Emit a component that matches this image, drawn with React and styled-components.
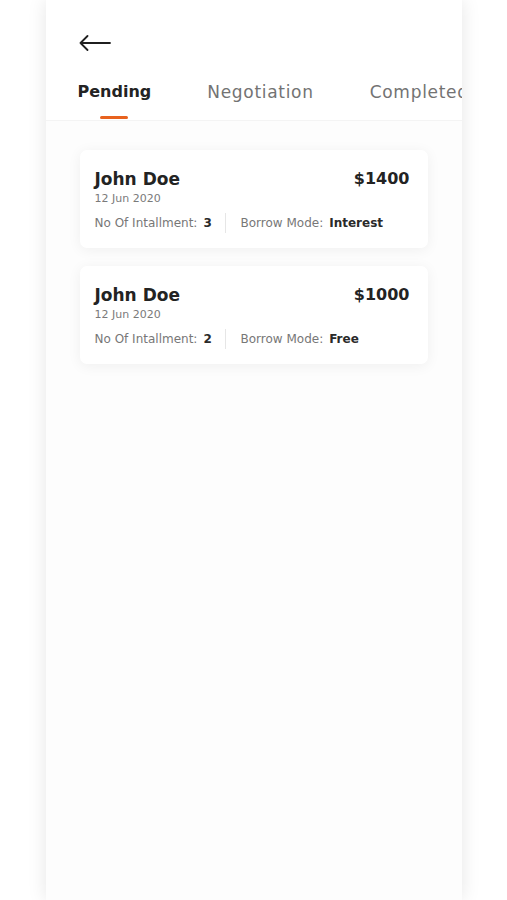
import React from "react";
import styled, { createGlobalStyle } from "styled-components";

const loans = [
  { name: "John Doe", date: "12 Jun 2020", amount: "$1400", installments: "3", mode: "Interest" },
  { name: "John Doe", date: "12 Jun 2020", amount: "$1000", installments: "2", mode: "Free" },
];

const tabs = ["Pending", "Negotiation", "Completed"];

const App = () => {
  return (
    <Page>
      <GlobalStyle />
      <Screen>
        <Header>
          <BackButton aria-label="Back">
            <svg width="32" height="16" viewBox="0 0 32 16" fill="none">
              <path
                d="M31 8H1.5M8.5 1L1.5 8l7 7"
                stroke="#1f1f1f"
                strokeWidth="1.8"
                strokeLinecap="round"
                strokeLinejoin="round"
              />
            </svg>
          </BackButton>
          <Tabs>
            {tabs.map((t, i) => (
              <Tab key={t} $active={i === 0}>
                {t}
              </Tab>
            ))}
          </Tabs>
        </Header>

        {/* list of loan requests */}
        <List>
          {loans.map((loan, i) => (
            <Card key={i}>
              <TopRow>
                <div>
                  <Name>{loan.name}</Name>
                  <DateText>{loan.date}</DateText>
                </div>
                <Amount>{loan.amount}</Amount>
              </TopRow>
              <InfoRow>
                <Info $width="130px">
                  No Of Intallment:<strong>{loan.installments}</strong>
                </Info>
                <Divider />
                <Info>
                  Borrow Mode:<strong>{loan.mode}</strong>
                </Info>
              </InfoRow>
            </Card>
          ))}
        </List>
      </Screen>
    </Page>
  );
};

export default App;

const GlobalStyle = createGlobalStyle`
  html, body {
    margin: 0;
    padding: 0;
    background: #ffffff;
    font-family: "DejaVu Sans", "Open Sans", sans-serif;
  }
  * {
    box-sizing: border-box;
  }
`;

const Page = styled.div`
  width: 100%;
  height: 900px;
  overflow: hidden;
  display: flex;
  justify-content: center;
  background: #ffffff;
`;

const Screen = styled.div`
  width: 416px;
  height: 900px;
  background: #fdfdfd;
  overflow: hidden;
  display: flex;
  flex-direction: column;
  box-shadow: 0 0 18px rgba(0, 0, 0, 0.1);
`;

const Header = styled.div`
  background: #ffffff;
  padding: 35px 0 0 32px;
  border-bottom: 1px solid #f4f4f4;
`;

const BackButton = styled.div`
  width: 32px;
  height: 16px;
  margin-left: 1px;
  display: flex;
  svg {
    display: block;
  }
`;

const Tabs = styled.div`
  display: flex;
  gap: 56px;
  margin-top: 31px;
  white-space: nowrap;
`;

const Tab = styled.div`
  position: relative;
  font-size: ${(p) => (p.$active ? "16px" : "17px")};
  line-height: 20px;
  padding-bottom: 18px;
  font-weight: ${(p) => (p.$active ? 700 : 400)};
  color: ${(p) => (p.$active ? "#232323" : "#737373")};
  letter-spacing: ${(p) => (p.$active ? "0" : "0.7px")};

  &::after {
    content: "";
    display: ${(p) => (p.$active ? "block" : "none")};
    position: absolute;
    left: 50%;
    bottom: 1px;
    width: 28px;
    height: 3px;
    margin-left: -14px;
    border-radius: 2px;
    background: #e8621e;
  }
`;

const List = styled.div`
  display: flex;
  flex-direction: column;
  gap: 18px;
  padding: 29px 34px;
`;

const Card = styled.div`
  background: #ffffff;
  border-radius: 7px;
  padding: 19px 18px 15px 15px;
  box-shadow: 0 2px 14px rgba(0, 0, 0, 0.06);
`;

const TopRow = styled.div`
  display: flex;
  justify-content: space-between;
  align-items: flex-start;
`;

const Name = styled.div`
  font-size: 17px;
  line-height: 20px;
  font-weight: 600;
  color: #232323;
`;

const DateText = styled.div`
  font-size: 11px;
  line-height: 14px;
  margin-top: 3px;
  color: #7a7a7a;
`;

const Amount = styled.div`
  font-size: 16px;
  line-height: 20px;
  font-weight: 700;
  color: #232323;
`;

const InfoRow = styled.div`
  display: flex;
  align-items: center;
  margin-top: 7px;
`;

const Info = styled.div`
  width: ${(p) => p.$width || "auto"};
  font-size: 12px;
  line-height: 20px;
  color: #777777;
  white-space: nowrap;

  strong {
    margin-left: 6px;
    font-weight: 700;
    color: #2a2a2a;
  }
`;

const Divider = styled.div`
  width: 1px;
  height: 20px;
  background: #e6e6e6;
  margin-right: 15px;
`;
